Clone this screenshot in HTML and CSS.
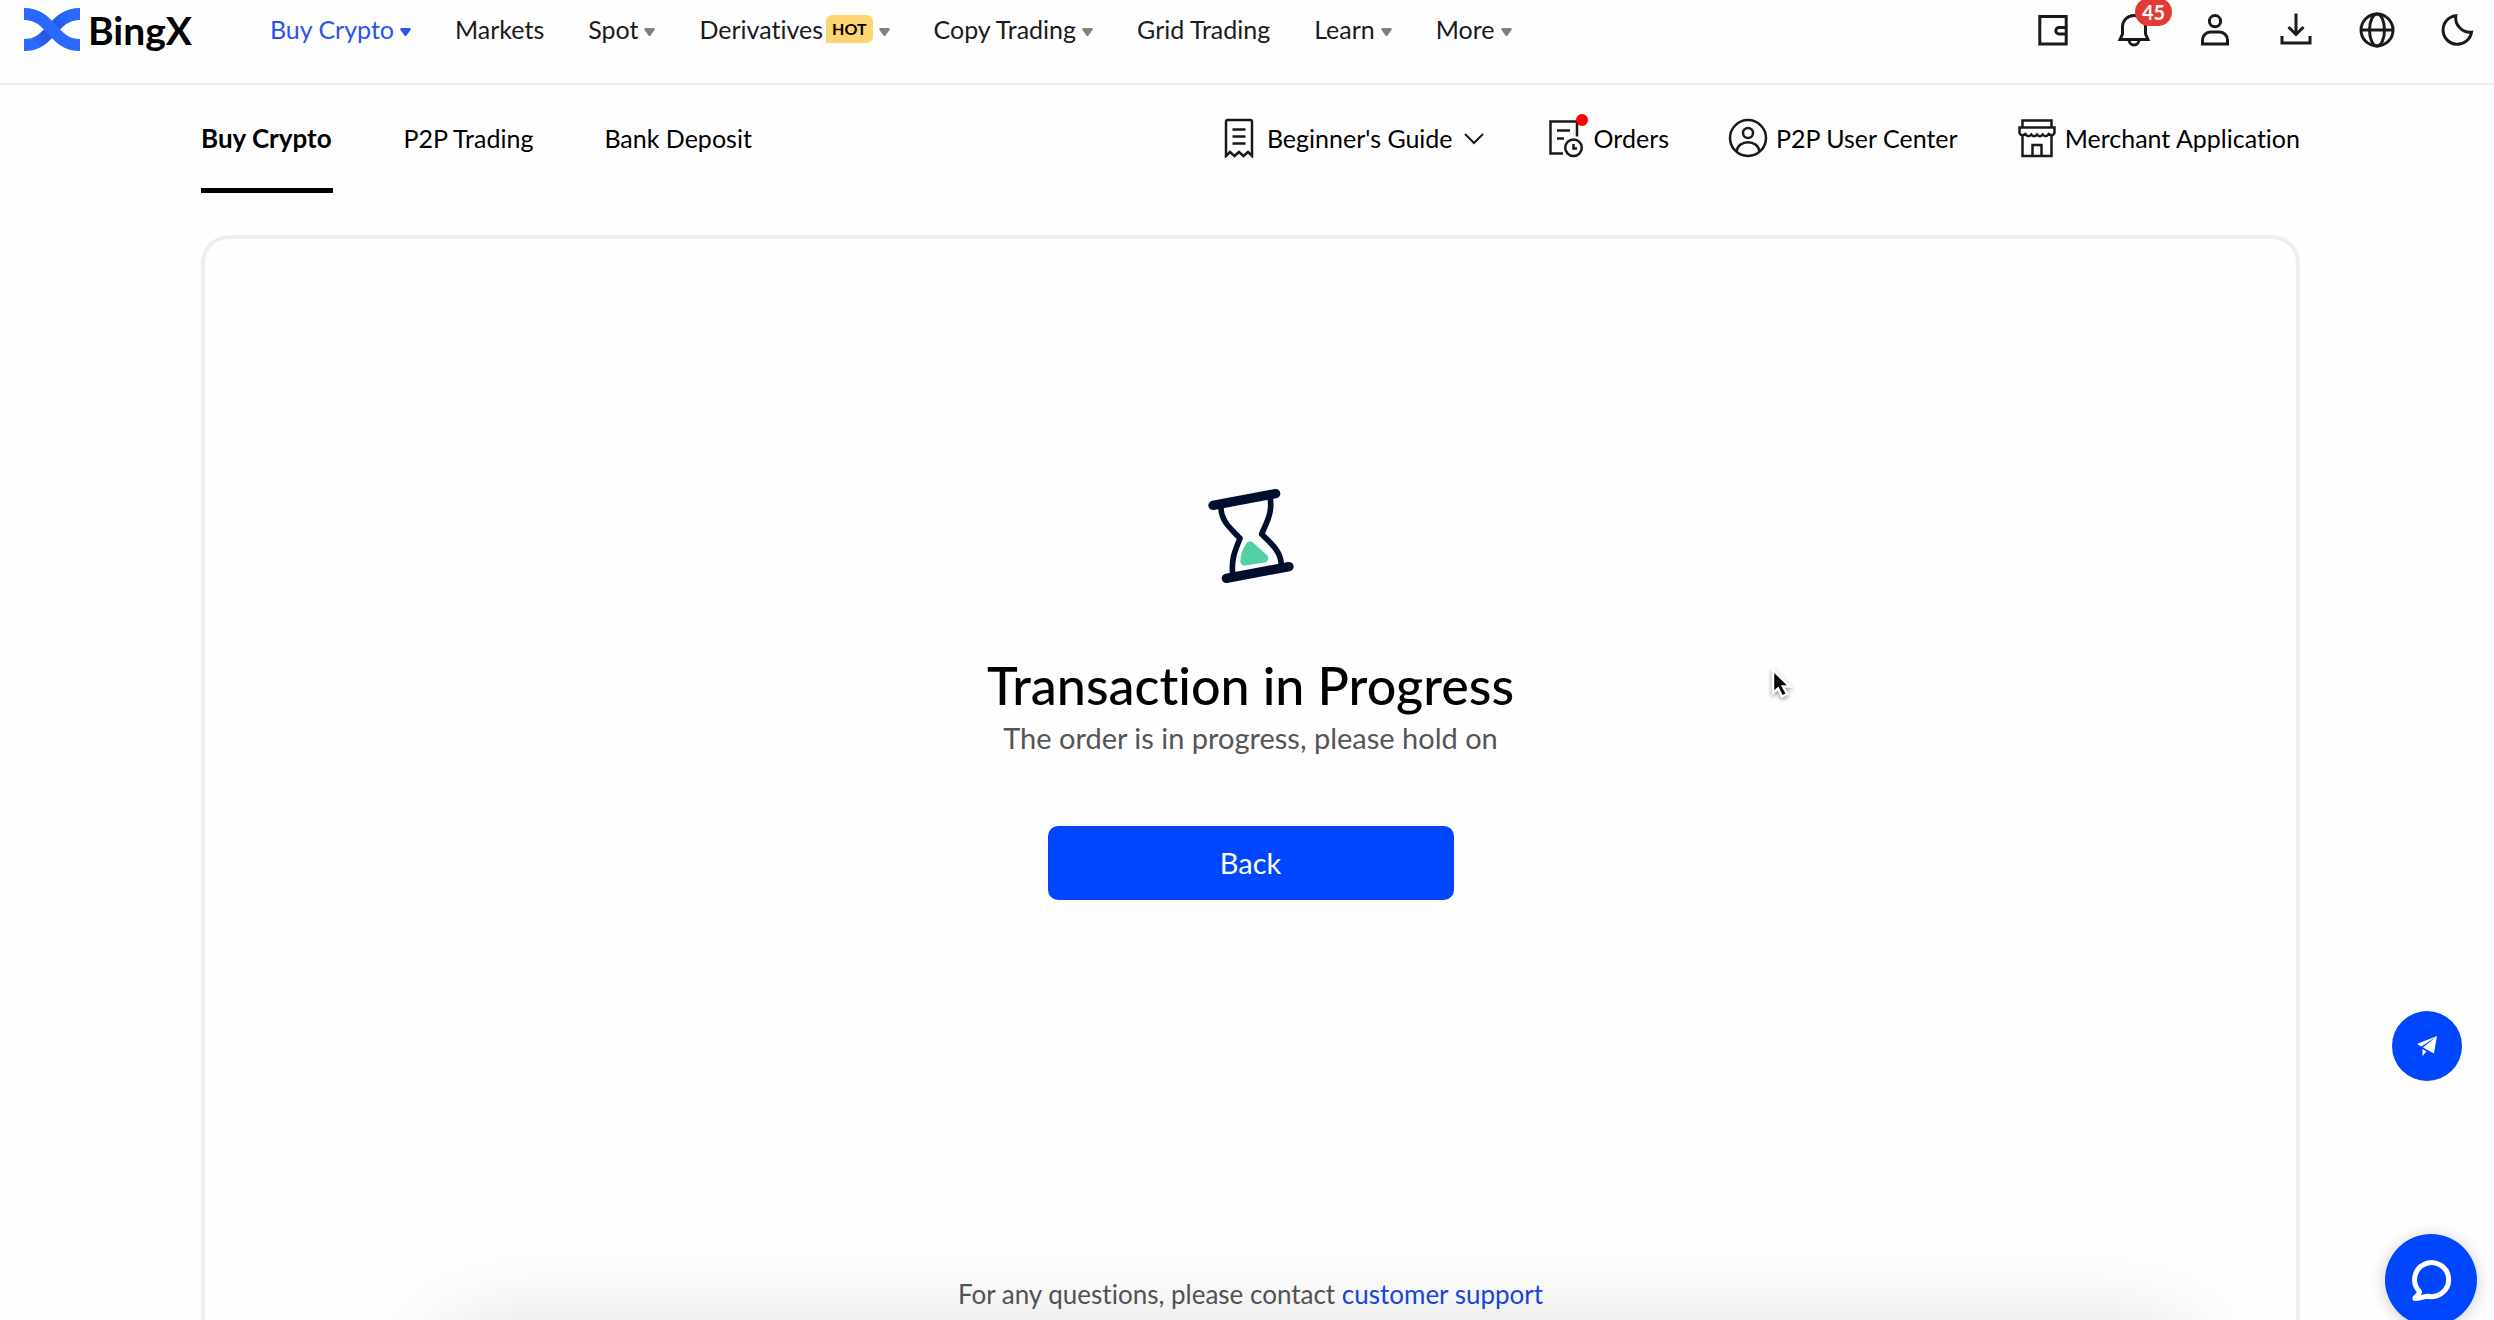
FILE: index.html
```html
<!DOCTYPE html>
<html lang="en">
  <head>
    <meta charset="utf-8" />
    <title>Transaction in Progress | BingX</title>
    <link rel="stylesheet" href="styles.css">
  </head>
  <body>
    <header class="header">
      <a class="logo" href="#">
        <svg width="56" height="44" viewBox="0 0 56 44" fill="none" stroke-width="12" aria-hidden="true">
          <defs>
            <linearGradient id="band" gradientUnits="userSpaceOnUse" x1="0" y1="44" x2="56" y2="0">
              <stop offset="0.2" stop-color="#2a68ff"/>
              <stop offset="0.48" stop-color="#2150d8"/>
              <stop offset="0.8" stop-color="#2a68ff"/>
            </linearGradient>
          </defs>
          <path d="M0 37C28 37 28 6 56 6" stroke="url(#band)"/>
          <path d="M0 6C28 6 28 37 56 37" stroke="#2a68ff"/>
        </svg>
        <span>BingX</span>
      </a>
      <nav class="mainNav">
        <a class="active" href="#">Buy Crypto <svg class="arrow" viewBox="0 0 11 8"><path d="M1.500 0h8q2 .6 1 2L6.500 7.400q-1 1-2 0L.5 2q-1-1.400 1-2z"/></svg></a>
        <a href="#">Markets</a>
        <a href="#">Spot <svg class="arrow" viewBox="0 0 11 8"><path d="M1.500 0h8q2 .6 1 2L6.500 7.400q-1 1-2 0L.5 2q-1-1.400 1-2z"/></svg></a>
        <a href="#"><span class="tagged">Derivatives<span class="hot">HOT</span></span> <svg class="arrow" viewBox="0 0 11 8"><path d="M1.500 0h8q2 .6 1 2L6.500 7.400q-1 1-2 0L.5 2q-1-1.400 1-2z"/></svg></a>
        <a href="#">Copy Trading <svg class="arrow" viewBox="0 0 11 8"><path d="M1.500 0h8q2 .6 1 2L6.500 7.400q-1 1-2 0L.5 2q-1-1.400 1-2z"/></svg></a>
        <a href="#">Grid Trading</a>
        <a href="#">Learn <svg class="arrow" viewBox="0 0 11 8"><path d="M1.500 0h8q2 .6 1 2L6.500 7.400q-1 1-2 0L.5 2q-1-1.400 1-2z"/></svg></a>
        <a href="#">More <svg class="arrow" viewBox="0 0 11 8"><path d="M1.500 0h8q2 .6 1 2L6.500 7.400q-1 1-2 0L.5 2q-1-1.400 1-2z"/></svg></a>
      </nav>
      <div class="tools">
        <button type="button" aria-label="Wallet">
          <svg viewBox="0 0 36 36"><path d="M4.800 4.500h26.400v27.500H4.800zM31 15.500h-7a3.200 3.200 0 0 0 0 6.400h7"/></svg>
        </button>
        <button type="button" aria-label="Notifications">
          <svg viewBox="0 0 36 36"><path d="M4 27.500h28l-2.500-5.500v-7.500a11.500 11 0 0 0-23 0V22zM13 28a5 5 0 0 0 10 0"/></svg>
          <span class="count">45</span>
        </button>
        <button type="button" aria-label="Account">
          <svg viewBox="0 0 36 36"><circle cx="18" cy="9.200" r="5.600"/><path d="M5.500 32h25v-4a8 8 0 0 0-8-8h-9a8 8 0 0 0-8 8z"/></svg>
        </button>
        <button type="button" aria-label="Download">
          <svg viewBox="0 0 36 36"><path d="M18 1.500v21M10.500 15l7.500 7.500 7.500-7.500M4 24v7h28v-7"/></svg>
        </button>
        <button type="button" aria-label="Language">
          <svg viewBox="0 0 36 36"><circle cx="18" cy="18" r="16"/><ellipse cx="18" cy="18" rx="7.500" ry="16"/><path d="M2 18h32"/></svg>
        </button>
        <button type="button" aria-label="Dark mode">
          <svg viewBox="0 0 36 36"><path d="M15.800 3.800A14.300 14.300 0 1 0 31.500 20.200A14.500 14.500 0 0 1 15.800 3.800z"/></svg>
        </button>
      </div>
    </header>

    <div class="subHeader">
      <nav class="tabs">
        <a class="current" href="#">Buy Crypto</a>
        <a href="#">P2P Trading</a>
        <a href="#">Bank Deposit</a>
      </nav>
      <nav class="links">
        <a href="#">
          <svg class="icon" viewBox="0 0 40 40"><path d="M7 38V4q0-2 2-2h22q2 0 2 2v34l-4-4-4.500 4-4.500-4-4.500 4-4.500-4zM13.500 11.500h13M13.500 18.500h13M13.500 25.500h13"/></svg>
          Beginner's Guide
          <svg class="chevron" viewBox="0 0 26 16"><path d="M4 4l9 9 9-9"/></svg>
        </a>
        <a href="#">
          <span class="dotted">
            <svg class="icon" viewBox="0 0 40 40"><path d="M17 35.500H4.500v-32H31v15M11 12.500h13M11 20.500h7M27.500 26v4.500h3.500"/><circle cx="27.500" cy="29.700" r="8.300"/></svg>
            <span class="dot"></span>
          </span>
          Orders
        </a>
        <a href="#">
          <svg class="icon" viewBox="0 0 40 40"><circle cx="20" cy="20" r="18"/><circle cx="20" cy="15" r="5"/><path d="M8.500 33.500C10 21 30 21 31.500 33.500"/></svg>
          P2P User Center
        </a>
        <a href="#">
          <svg class="icon" viewBox="0 0 40 40"><path d="M5.500 9.500v-7h29v7M2.500 9.500h35V15q-2 4-5.800 1-3 4-6 .5-2.900 3.500-5.700 0-2.900 3.500-5.700 0-3 3.500-6-.5-3.800 3-5.800-1zM5.500 17v21h29V17M15.500 38V27h9v11"/></svg>
          Merchant Application
        </a>
      </nav>
    </div>

    <main class="card">
      <svg class="hourglass" viewBox="0 0 420 420" fill="none" stroke="#000f2e" stroke-linecap="round" aria-hidden="true">
        <path d="M96 136L284 101M136 355L324 320" stroke-width="28"/>
        <path d="M120 146C122 184 148 205 177 235C164 268 150 296 155 340" stroke-width="17" stroke-linejoin="round"/>
        <path d="M268 118C274 160 256 188 242 222C271 252 299 272 301 314" stroke-width="17" stroke-linejoin="round"/>
        <path d="M207 257L249 295L191 304Q192 280 207 257z" fill="#55cfa4" stroke="#55cfa4" stroke-width="26" stroke-linejoin="round"/>
      </svg>
      <h1>Transaction in Progress</h1>
      <p class="message">The order is in progress, please hold on</p>
      <button class="back" type="button">Back</button>
      <p class="support">For any questions, please contact <a href="#">customer support</a></p>
    </main>

    <button class="float telegram" type="button" aria-label="Telegram">
      <svg width="24" height="24" viewBox="0 0 24 24" fill="#fff"><path d="M22 2L2 10l4.500 2.500zM22 2L8 13.500l11 6zM7.500 15v7l4-4.500z"/></svg>
    </button>
    <button class="float chat" type="button" aria-label="Chat">
      <svg width="44" height="44" viewBox="0 0 44 44" fill="none" stroke="#fff" stroke-width="5" stroke-linejoin="round"><path d="M10.500 33.500A17 17 0 1 1 19 38.200C15 38 12 41 6 40.500C5 39 10 38.500 10.500 33.500z"/></svg>
    </button>
    <svg class="cursor" width="22" height="32" viewBox="0 0 22 32" aria-hidden="true"><path d="M2 2v23l5-4.500 4 8 5-2.500-4-7.500h7z" stroke="#fff" stroke-width="2.500"/></svg>
    <div class="dockShadow"></div>
  </body>
</html>
```
FILE: styles.css
```css
* {
  box-sizing: border-box;
}

body {
  margin: 0;
  min-height: 100vh;
  display: flex;
  flex-direction: column;
  background: #fefefe;
  color: #000;
  font: 25px/40px Lato, "Open Sans", sans-serif;
  font-variant-ligatures: none;
}

a {
  color: inherit;
  text-decoration: none;
}

button {
  padding: 0;
  border: 0;
  background: none;
  color: inherit;
  font: inherit;
  cursor: pointer;
}

svg {
  display: block;
  flex: none;
}

.header {
  display: flex;
  align-items: center;
  height: 85px;
  padding: 0 18px 24px 24px;
  border-bottom: 2px solid #eee;
  color: #1a1a1a;
}

.logo {
  display: flex;
  align-items: center;
  gap: 8px;
  margin-right: 78px;
  color: #000;
  font-size: 39px;
  font-weight: 700;
}

.mainNav {
  display: flex;
  gap: 44px;
  padding-bottom: 2px;
}

.mainNav a {
  display: flex;
  align-items: center;
  gap: 6px;
  white-space: nowrap;
}

.mainNav .active {
  color: #2a54f0;
}

.arrow {
  width: 11px;
  height: 8px;
  margin-top: 6px;
  fill: #808080;
}

.active .arrow {
  fill: currentColor;
}

.tagged {
  display: flex;
  align-items: center;
  gap: 3px;
}

.hot {
  padding: 0 6px;
  border-radius: 6px 6px 6px 0;
  background: #ffd572;
  color: #000;
  font-size: 16px;
  font-weight: 700;
  line-height: 28px;
}

.tools {
  display: flex;
  gap: 45px;
  margin-left: auto;
}

.tools button {
  position: relative;
}

.tools svg {
  width: 36px;
  height: 36px;
  fill: none;
  stroke: #1a1a1a;
  stroke-width: 3;
}

.count {
  position: absolute;
  top: -14px;
  left: 19px;
  padding: 0 7px;
  border-radius: 14px;
  background: #e53935;
  color: #fff;
  font-size: 20px;
  font-weight: 700;
  line-height: 28px;
}

.subHeader {
  display: flex;
  justify-content: space-between;
  height: 108px;
  padding: 0 194px 0 201px;
}

.tabs,
.links {
  display: flex;
  gap: 71px;
}

.links {
  gap: 59px;
}

.tabs a,
.links a {
  display: flex;
  align-items: center;
  gap: 8px;
  padding-bottom: 3px;
  white-space: nowrap;
}

.tabs .current {
  padding: 5px 1px 3px 0;
  border-bottom: 5px solid #000;
  font-size: 26px;
  font-weight: 700;
}

.icon {
  width: 40px;
  height: 40px;
  fill: none;
  stroke: #1a1a1a;
  stroke-width: 2.5;
}

.chevron {
  width: 26px;
  height: 16px;
  fill: none;
  stroke: #1a1a1a;
  stroke-width: 2;
}

.dotted {
  position: relative;
}

.dot {
  position: absolute;
  top: -4px;
  right: -2px;
  width: 12px;
  height: 12px;
  border-radius: 50%;
  background: #f00;
}

.card {
  flex: 1;
  display: flex;
  flex-direction: column;
  align-items: center;
  margin: 42px 194px 0 201px;
  padding: 221px 20px 6px;
  border: 4px solid #eee;
  border-width: 4px 4px 0;
  border-radius: 28px 28px 0 0;
}

.hourglass {
  width: 140px;
  height: 140px;
}

h1 {
  margin: 53px 0 0;
  font-size: 52px;
  font-weight: 500;
  line-height: 65px;
}

.message {
  margin: 0;
  color: #555;
  font-size: 29px;
}

.back {
  width: 406px;
  height: 74px;
  margin-top: 68px;
  border-radius: 10px;
  background: #0046ff;
  color: #fff;
  font-size: 29px;
}

.support {
  margin: auto 0 0;
  color: #555;
  font-size: 26px;
}

.support a {
  color: #1748e5;
}

.float {
  position: fixed;
  display: flex;
  align-items: center;
  justify-content: center;
  border-radius: 50%;
  background: #0046ff;
}

.telegram {
  right: 32px;
  bottom: 239px;
  width: 70px;
  height: 70px;
}

.chat {
  right: 17px;
  bottom: -6px;
  width: 92px;
  height: 92px;
  box-shadow: 0 2px 16px rgba(0, 0, 0, 0.2);
}

.cursor {
  position: absolute;
  top: 668px;
  left: 1771px;
  filter: drop-shadow(0 2px 2px rgba(0, 0, 0, 0.4));
}

/* shade cast up from below the window edge */
.dockShadow {
  position: fixed;
  right: 314px;
  bottom: -220px;
  left: 450px;
  height: 200px;
  box-shadow: 0 0 100px rgba(0, 0, 0, 0.18);
  pointer-events: none;
}
```
